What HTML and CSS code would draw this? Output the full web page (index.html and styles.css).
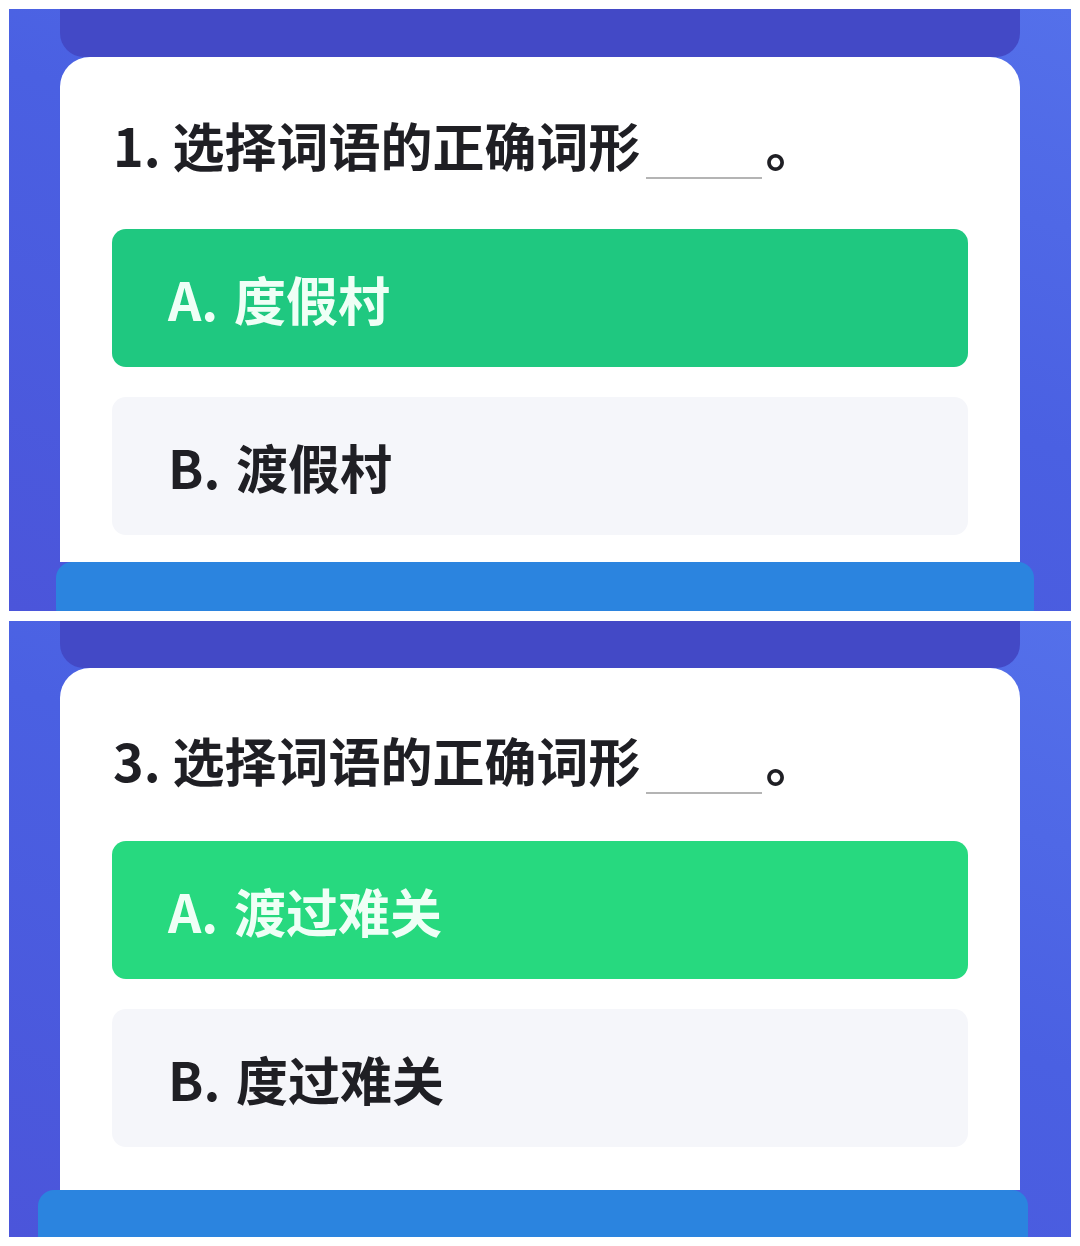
FILE: index.html
```html
<!DOCTYPE html>
<html lang="zh-CN">
<head>
    <meta charset="UTF-8">
    <title>选择词语的正确词形</title>
    <link rel="stylesheet" href="styles.css">
</head>
<body>
<div class="shot">
    <div class="topbar"></div>
    <div class="card">
        <div class="question">1. 选择词语的正确词形<span class="blank"></span>。</div>
        <div class="option correct">A. 度假村</div>
        <div class="option">B. 渡假村</div>
    </div>
    <div class="bottombar"></div>
</div>

<div class="shot shot-2">
    <div class="topbar"></div>
    <div class="card">
        <div class="question">3. 选择词语的正确词形<span class="blank"></span>。</div>
        <div class="option correct">A. 渡过难关</div>
        <div class="option">B. 度过难关</div>
    </div>
    <div class="bottombar"></div>
</div>
</body>
</html>
```

FILE: styles.css
```css
body {
    margin: 0;
    background-color: #ffffff;
    font-family: "Noto Sans CJK SC", "Noto Sans", sans-serif;
}

.shot {
    margin: 9px 9px 0 9px;
    height: 602px;
    display: flex;
    flex-direction: column;
    overflow: hidden;
    background: linear-gradient(200deg, #5470ea 0%, #4a60e2 45%, #4b55da 100%);
}

.topbar {
    margin: 0 51px;
    height: 48px;
    flex-shrink: 0;
    background-color: #4349c6;
    border-radius: 0 0 24px 24px;
}

.card {
    margin: 0 51px;
    height: 505px;
    flex-shrink: 0;
    box-sizing: border-box;
    padding: 62px 52px 0 52px;
    background-color: #ffffff;
    border-radius: 30px 30px 0 0;
}

.question {
    font-size: 52px;
    line-height: 52px;
    font-weight: bold;
    color: #1f1f24;
    padding-left: 1px;
    margin-bottom: 50px;
    white-space: nowrap;
}

.blank {
    display: inline-block;
    width: 116px;
    height: 2px;
    margin: 0 3px 0 6px;
    vertical-align: -12px;
    background-color: #b4b4b4;
}

.option {
    height: 138px;
    box-sizing: border-box;
    padding-left: 56px;
    display: flex;
    align-items: center;
    margin-bottom: 30px;
    font-size: 52px;
    font-weight: bold;
    word-spacing: 4px;
    color: #1f1f24;
    background-color: #f5f6fa;
    border-radius: 14px;
}

.option.correct {
    color: #effff6;
    background-color: #1fc880;
}

.bottombar {
    margin-left: 47px;
    width: 978px;
    height: 62px;
    flex-shrink: 0;
    background-color: #2b84df;
    border-radius: 16px;
}

.shot-2 {
    margin-top: 10px;
    height: 616px;
}

.shot-2 .topbar {
    height: 47px;
}

.shot-2 .card {
    height: 522px;
    padding-top: 66px;
}

.shot-2 .question {
    margin-bottom: 47px;
}

.shot-2 .option.correct {
    background-color: #27d97f;
}

.shot-2 .bottombar {
    margin-left: 29px;
    width: 990px;
}
```
